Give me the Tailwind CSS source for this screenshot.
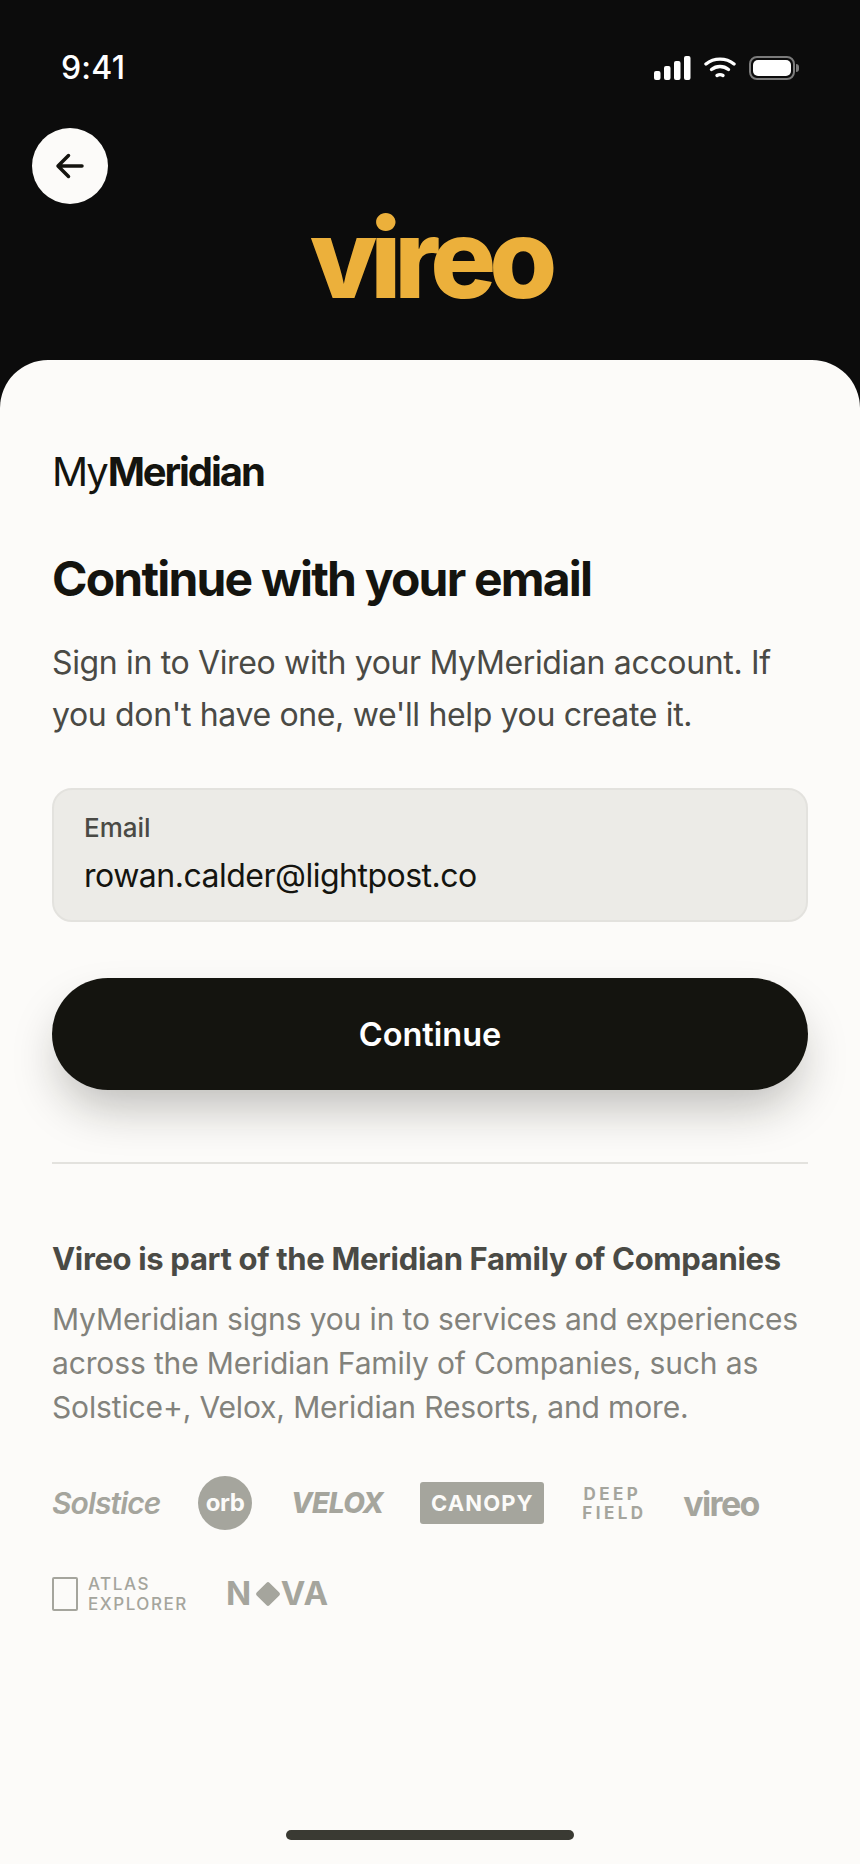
<!DOCTYPE html>
<html lang="en">

<head>
  <meta charset="UTF-8">
  <meta content="width=device-width, initial-scale=1" name="viewport">
  <title>Vireo sign in</title>
  <script src="https://cdn.jsdelivr.net/npm/@tailwindcss/browser@4"></script>
</head>

<body class="flex h-[1864px] w-[860px] flex-col overflow-hidden bg-[#0c0c0c] font-['Inter',sans-serif]">

  <header class="relative h-[360px] shrink-0">
    <!-- status bar -->
    <div class="flex h-[136px] items-center justify-between px-[61px]">
      <span class="text-[32px] leading-none font-medium tracking-[0.2px] text-white">9:41</span>
      <div class="flex items-center gap-[13px]">
        <svg class="h-[24px] w-[37px]" viewBox="0 0 37 24" fill="#fff">
          <rect x="0" y="15" width="6.500" height="9" rx="2" />
          <rect x="10" y="10" width="6.500" height="14" rx="2" />
          <rect x="20" y="5" width="6.500" height="19" rx="2" />
          <rect x="30" y="0" width="6.500" height="24" rx="2" />
        </svg>
        <svg class="h-[22px] w-[32px]" viewBox="0 0 32 22" fill="none" stroke="#fff" stroke-width="3.400" stroke-linecap="round">
          <path d="M2 7C10 0.500 22 0.500 30 7" />
          <path d="M7.500 12.500C12.500 8.500 19.500 8.500 24.500 12.500" />
          <path d="M13 18.500C15 17.300 17 17.300 19 18.500" />
        </svg>
        <div class="flex items-center gap-[1px]">
          <div class="flex h-[24px] w-[46px] items-center justify-center rounded-[8px] border-[2px] border-[#7b7b7b] p-[2px]">
            <div class="h-full w-full rounded-[5px] bg-white"></div>
          </div>
          <div class="h-[8px] w-[3px] rounded-r-full bg-[#7b7b7b]"></div>
        </div>
      </div>
    </div>

    <a class="absolute top-[128px] left-[32px] flex h-[76px] w-[76px] items-center justify-center rounded-full bg-[#fcfbf9]" href="#">
      <svg class="h-[30px] w-[30px]" viewBox="0 0 30 30" fill="none" stroke="#14140f" stroke-width="3.500" stroke-linecap="round" stroke-linejoin="round">
        <path d="M27 15H3.500M13.500 4.500 3 15l10.500 10.500" />
      </svg>
    </a>

    <div class="absolute inset-x-0 top-[197px] text-center text-[110px] leading-[122px] font-extrabold tracking-[-0.065em] text-[#ecb03b]">vireo</div>
  </header>

  <main class="flex flex-1 flex-col rounded-t-[48px] bg-[#fcfbf9] px-[52px] pt-[90px]">
    <div class="text-[40px] leading-[44px] tracking-[-0.052em] text-[#14140f]">My<span class="ml-[1px] font-bold">Meridian</span></div>

    <h1 class="mt-[56px] text-[48px] leading-[58px] font-bold tracking-[-0.0375em] text-[#14140f]">Continue with your email</h1>

    <p class="mt-[29px] text-[32px] leading-[52px] tracking-[-0.35px] text-[#4a4a45]">Sign in to Vireo with your MyMeridian account. If you don't have one, we'll help you create it.</p>

    <div class="mt-[47px] flex h-[134px] flex-col rounded-[20px] border-2 border-[#e3e2de] bg-[#ecebe7] px-[30px] pt-[21px]">
      <label class="text-[26px] leading-[34px] font-medium text-[#4a4a45]">Email</label>
      <span class="mt-[9px] text-[32px] leading-[44px] tracking-[-0.5px] text-[#14140f]">rowan.calder@lightpost.co</span>
    </div>

    <button class="mt-[56px] h-[112px] shrink-0 rounded-full bg-[#14140f] pt-[2px] text-[32.500px] font-semibold text-white shadow-[0_24px_48px_-8px_rgba(20,20,15,0.28)]" type="button">Continue</button>

    <div class="mt-[72px] h-[2px] shrink-0 bg-[#e3e2de]"></div>

    <h2 class="mt-[75px] text-[31px] leading-[40px] font-bold tracking-[-0.33px] text-[#4a4a45]">Vireo is part of the Meridian Family of Companies</h2>

    <p class="mt-[18px] text-[30px] leading-[44px] tracking-[-0.14px] text-[#82827c]">MyMeridian signs you in to services and experiences across the Meridian Family of Companies, such as Solstice+, Velox, Meridian Resorts, and more.</p>

    <!-- family logos -->
    <div class="mt-[47px] flex h-[54px] items-center text-[#a5a59d]">
      <span class="w-[146px] text-[30px] font-semibold tracking-[-0.03em] italic">Solstice</span>
      <span class="flex h-[54px] w-[54px] items-center justify-center rounded-full bg-[#a5a59d] text-[24px] font-bold tracking-[-0.02em] text-[#fcfbf9]">orb</span>
      <span class="ml-[39px] text-[28px] font-extrabold tracking-[-0.02em] italic">VELOX</span>
      <span class="ml-[37px] flex h-[42px] w-[124px] items-center justify-center rounded-[3px] bg-[#a5a59d] pt-[1px] text-[22px] font-bold tracking-[0.05em] text-[#fcfbf9]">CANOPY</span>
      <span class="ml-[38px] w-[60px] pt-[2px] text-center text-[17px] leading-[19px] font-bold tracking-[0.2em]">DEEP FIELD</span>
      <span class="ml-[41px] text-[34px] font-bold tracking-[-0.05em]">vireo</span>
    </div>

    <div class="mt-[46px] flex h-[36px] items-center text-[#a5a59d]">
      <span class="h-[34px] w-[26px] rounded-[2px] border-2 border-[#a5a59d]"></span>
      <span class="ml-[10px] w-[100px] text-[17px] leading-[20px] font-medium tracking-[0.09em]">ATLAS EXPLORER</span>
      <span class="ml-[38px] flex items-center text-[33px] font-bold tracking-[0.02em]">N<span class="mr-[1px] ml-[7px] h-[18px] w-[18px] rotate-45 rounded-[2px] bg-[#a5a59d]"></span><span class="ml-[3px]">VA</span></span>
    </div>

    <div class="mt-auto mb-[24px] h-[10px] w-[288px] self-center rounded-full bg-[#3a3a33]"></div>
  </main>

</body>

</html>
